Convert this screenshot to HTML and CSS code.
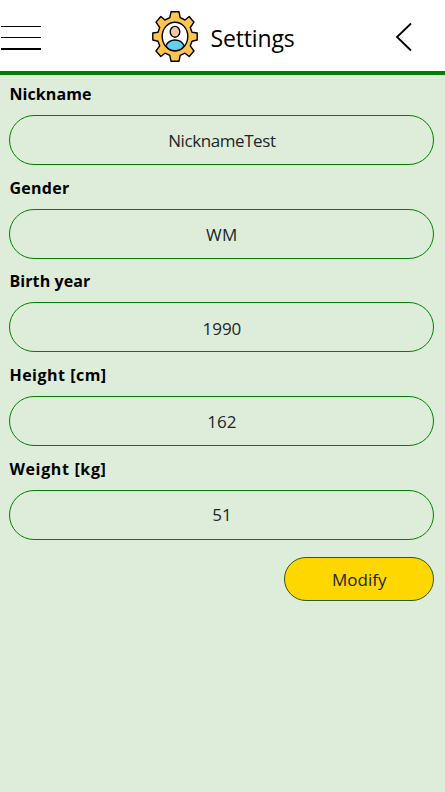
FILE: index.html
```html
<!DOCTYPE html>
<html lang="en">
<head>
<meta charset="utf-8">
<title>Settings</title>
<link rel="stylesheet" href="styles.css">
</head>
<body>
<header class="header">
  <button class="menu" aria-label="Menu"><span></span><span></span><span class="thick"></span></button>
  <div class="brand">
    <svg class="gear" viewBox="0 0 46 51" aria-hidden="true">
      <g stroke="#000" stroke-width="1.4" stroke-linejoin="round">
        <path fill="#fec651" d="M19 .8H27L28.2 6.7L33 9L37.2 5.5L42 11.2L38.3 16.5L40 21.2L45.2 22V29L40 30.2L38.3 34.8L42 40L37.2 45.5L33 42.2L28.2 44.4L27 50.2H19L17.8 44.4L13 42.2L8.8 45.5L4 40L7.7 34.8L6 30.2L.8 29V22L6 21.2L7.7 16.5L4 11.2L8.8 5.5L13 9L17.8 6.7Z"/>
        <ellipse cx="23" cy="25.5" rx="12.8" ry="14.3" fill="#fff"/>
        <path fill="#64d0f0" d="M13.8 34.8C16 30.5 19.5 29 23 29S30 30.5 32.2 34.8C30 38 27 39.7 23 39.7S16 38 13.8 34.8Z"/>
        <ellipse cx="23" cy="20.8" rx="4.8" ry="5.4" fill="#f5c6a5"/>
      </g>
    </svg>
    <h1 class="title">Settings</h1>
  </div>
  <button class="back" aria-label="Back">
    <svg viewBox="0 0 18 30" aria-hidden="true"><path d="M16 1.5L2 15L16 28.5" fill="none" stroke="#000" stroke-width="1.8"/></svg>
  </button>
</header>
<main class="form">
  <label class="field"><span class="label">Nickname</span><input class="name" value="NicknameTest" readonly></label>
  <label class="field"><span class="label gender">Gender</span><input class="caps" value="WM" readonly></label>
  <label class="field"><span class="label">Birth year</span><input class="year" value="1990" readonly></label>
  <label class="field"><span class="label unit">Height [cm]</span><input value="162" readonly></label>
  <label class="field"><span class="label weight">Weight [kg]</span><input value="51" readonly></label>
  <button class="modify">Modify</button>
</main>
</body>
</html>
```
FILE: styles.css
```css
* { box-sizing: border-box; }
body {
  margin: 0;
  min-height: 100vh;
  background: #deedd9;
  color: #000;
  font-family: "Open Sans", "Noto Sans", sans-serif;
}
button { padding: 0; border: 0; background: none; font-family: inherit; }
.header {
  display: flex;
  align-items: center;
  justify-content: space-between;
  height: 75px;
  padding: 0 32px 0 1px;
  border-bottom: 4px solid green;
  background: #fff;
}
.menu {
  display: flex;
  flex-direction: column;
  gap: 10px;
  width: 40px;
  padding-top: 5px;
}
.menu span { height: 1px; background: #000; }
.menu .thick { height: 2px; }
.brand { display: flex; align-items: center; gap: 12px; margin-left: 11px; padding-top: 2px; }
.gear { width: 46px; height: 51px; }
.title { margin: 3px 0 0; font-size: 23px; line-height: 32px; font-weight: 400; letter-spacing: -.15px; }
.back { padding-top: 3px; }
.back svg { display: block; width: 18px; height: 30px; }
.form { display: flex; flex-direction: column; padding: 6px 10.6px 0 9.4px; }
.field { display: flex; flex-direction: column; height: 93.7px; }
.label { height: 34px; line-height: 26px; font-size: 16px; font-weight: 700; letter-spacing: .1px; }
.label.gender { letter-spacing: .3px; }
.label.unit { letter-spacing: .5px; }
.label.weight { letter-spacing: .65px; }
.field input {
  width: 100%;
  height: 50px;
  padding: 1px 16px;
  border: 1px solid green;
  border-radius: 25px;
  background: transparent;
  color: #212529;
  font: 400 17px "Open Sans", "Noto Sans", sans-serif;
  text-align: center;
}
.field .name { letter-spacing: -.42px; }
.field .caps { padding-top: 2px; letter-spacing: .4px; }
.field .year { padding-top: 3px; }
.modify {
  align-self: flex-end;
  width: 150.2px;
  height: 44px;
  margin-top: 7.3px;
  padding-top: 2px;
  border: 1px solid #35590f;
  border-radius: 22px;
  background: gold;
  color: #212529;
  font-size: 17px;
}
```
